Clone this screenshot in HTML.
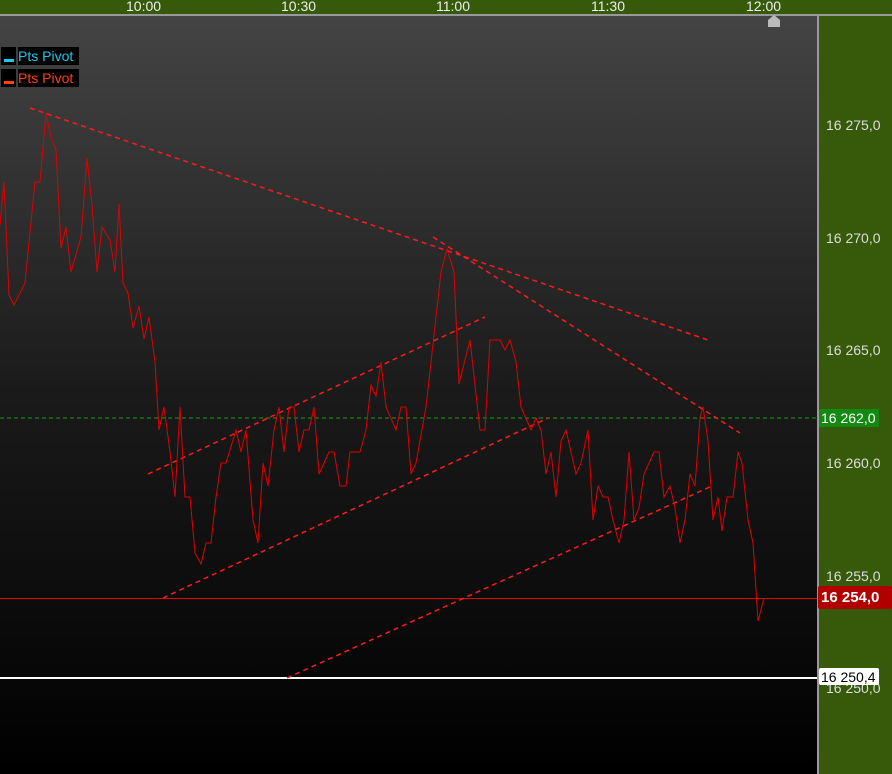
<!DOCTYPE html>
<html><head><style>
body{margin:0;width:892px;height:774px;overflow:hidden;font-family:"Liberation Sans",sans-serif;background:#365a0a;position:relative}
.top{position:absolute;left:0;top:0;width:892px;height:14px;background:#365a0a}
.tl{position:absolute;top:-2px;color:#eee;font-size:14px}
.chart{position:absolute;left:0;top:16px;width:817px;height:758px;background:linear-gradient(#444 0%,#1a1a1a 50%,#000 100%)}
.vl{position:absolute;left:817px;top:14px;width:2px;height:760px;background:#999}
.hl{position:absolute;left:0;top:14px;width:892px;height:2px;background:#999}
.pl{position:absolute;left:826px;color:#ddd;font-size:14px}
.leg{position:absolute;left:0;height:18px;font-size:14px}
.leg .b{position:absolute;left:1px;top:0;width:15px;height:18px;background:#000}
.leg .t{position:absolute;left:18px;top:0;width:61px;height:18px;background:#000;line-height:18px}
</style></head><body>
<div class="top"></div>
<div class="tl" style="left:126px">10:00</div>
<div class="tl" style="left:281px">10:30</div>
<div class="tl" style="left:436px">11:00</div>
<div class="tl" style="left:591px">11:30</div>
<div class="tl" style="left:746px">12:00</div>
<div class="chart"></div>
<div class="hl"></div><div class="vl"></div>
<svg width="892" height="774" style="position:absolute;left:0;top:0">
<polygon points="768,20 774,15 780,20 780,27 768,27" fill="#bbb"/>
<line x1="0" y1="418" x2="817" y2="418" stroke="#1aa01a" stroke-dasharray="4,3"/>
<line x1="0" y1="598.5" x2="817" y2="598.5" stroke="#e00000"/>
<line x1="0" y1="678" x2="817" y2="678" stroke="#fff" stroke-width="2"/>
<g stroke="#ff1a1a" stroke-width="1.5" stroke-dasharray="5,4">
<line x1="30" y1="108" x2="708" y2="340"/>
<line x1="433" y1="237" x2="740" y2="433"/>
<line x1="148" y1="474" x2="485" y2="317"/>
<line x1="163" y1="598" x2="548" y2="418"/>
<line x1="287" y1="678" x2="712" y2="486"/>
</g>
<polyline fill="none" stroke="#e00000" stroke-width="1" points="0,225 4,182 9,295 14,305 25,283 35,182 40,182 46,113 51,137 56,150 61,248 66,227 71,272 81,237 87,158 92,205 97,272 102,227 110,240 115,272 119,204 123,283 128,293 133,328 139,306 144,339 149,317 155,362 159,430 164,407 170,452 175,497 180,407 185,497 190,497 195,553 201,564 206,543 211,543 216,497 221,463 226,463 236,430 241,452 246,430 253,520 258,543 263,463 268,486 274,430 279,407 284,452 289,407 294,407 299,452 304,430 309,430 314,407 319,474 329,452 334,452 340,486 346,486 350,452 360,452 366,430 371,385 376,396 381,362 386,407 396,430 401,407 406,407 411,474 416,463 426,407 431,362 436,317 441,272 447,249 454,272 459,384 470,340 480,430 485,430 490,340 500,340 505,350 510,340 516,362 521,407 531,430 536,418 541,430 546,474 551,452 556,497 561,441 566,430 571,452 576,474 581,463 588,430 593,520 598,486 603,497 608,497 613,520 619,543 624,520 629,452 634,520 639,508 644,474 654,452 659,452 664,497 670,486 675,508 680,543 685,520 690,474 695,486 700,418 703,407 708,441 713,520 718,497 722,531 727,497 733,497 738,452 742,463 748,520 753,543 758,621 764,598"/>
</svg>
<div class="leg" style="top:47px"><div class="b"><div style="position:absolute;left:3px;top:12px;width:10px;height:3px;background:#1ec8ee"></div></div><div class="t" style="color:#1ec8ee">Pts Pivot</div></div>
<div class="leg" style="top:69px"><div class="b"><div style="position:absolute;left:3px;top:12px;width:10px;height:3px;background:#ff4010"></div></div><div class="t" style="color:#ff4010">Pts Pivot</div></div>
<div class="pl" style="top:117px">16 275,0</div>
<div class="pl" style="top:230px">16 270,0</div>
<div class="pl" style="top:342px">16 265,0</div>
<div class="pl" style="top:455px">16 260,0</div>
<div class="pl" style="top:568px">16 255,0</div>
<div class="pl" style="top:680px">16 250,0</div>
<div style="position:absolute;left:819px;top:409px;width:58px;height:18px;background:#128a12;color:#fff;font-size:14px;line-height:18px;padding-left:2px">16 262,0</div>
<div style="position:absolute;left:818px;top:586px;width:74px;height:23px;background:#b00000;color:#fff;font-size:15px;font-weight:bold;line-height:23px;padding-left:3px;box-sizing:border-box;border-radius:2px">16 254,0</div>
<div style="position:absolute;left:819px;top:668px;width:58px;height:17px;background:#fff;color:#000;font-size:14px;line-height:18px;padding-left:2px;border-radius:2px">16 250,4</div>
</body></html>
